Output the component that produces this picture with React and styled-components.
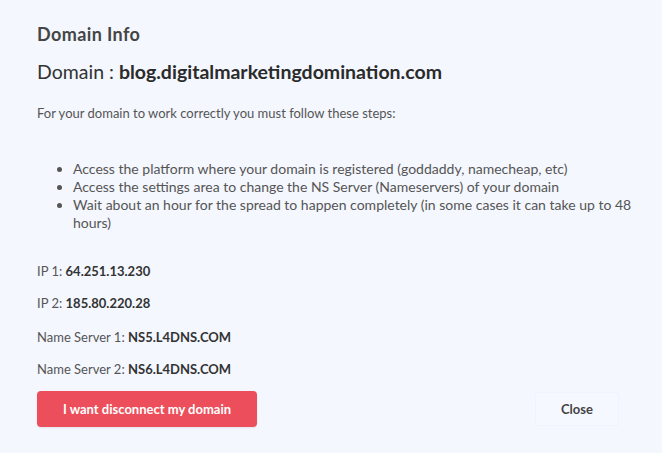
import React from "react";
import styled, {createGlobalStyle} from "styled-components";

const GlobalStyle = createGlobalStyle`
  html, body {
    margin: 0;
    padding: 0;
    background: #f4f7fe;
  }
  body {
    font-family: Lato, "Noto Sans", sans-serif;
    color: #4a4a4a;
  }
`;

const Modal = styled.div`
  width: 662px;
  height: 453px;
  box-sizing: border-box;
  padding: 22px 20px 0 37px;
  background: #f4f7fe;
  display: flex;
  flex-direction: column;
`;

const Title = styled.h3`
  margin: 0;
  font-size: 18px;
  line-height: 24px;
  font-weight: 700;
  letter-spacing: 0.4px;
  color: #454545;
`;

const DomainLine = styled.div`
  margin-top: 13px;
  font-size: 19.5px;
  line-height: 26px;
  color: #333;
  font-weight: 400;

  b {
    font-weight: 700;
    color: #2b2b2b;
  }
`;

const Text = styled.p`
  margin: 19px 0 0 0;
  font-size: 13px;
  line-height: 18px;
  color: #555;
`;

const Steps = styled.ul`
  margin: 38px 0 0 0;
  padding: 0 0 0 36px;
  font-size: 14px;
  line-height: 18px;
  color: #555;
`;

const InfoRow = styled.div`
  margin-top: ${p => p.$gap}px;
  font-size: 13px;
  line-height: 18px;
  color: #555;

  b {
    font-weight: 700;
    color: #333;
  }
`;

const Footer = styled.div`
  margin-top: 13px;
  display: flex;
  justify-content: space-between;
  align-items: center;
`;

const DangerButton = styled.button`
  width: 220px;
  height: 36px;
  border: none;
  border-radius: 4px;
  background: #ec4f5b;
  color: #fff;
  font-family: inherit;
  font-size: 13px;
  font-weight: 700;
  box-shadow: 0 1px 2px rgba(0, 0, 0, 0.08);
`;

const CloseButton = styled.button`
  width: 84px;
  height: 34px;
  margin-right: 23px;
  border: 1px solid #f0f3fb;
  border-radius: 4px;
  background: #f6f8ff;
  color: #444;
  font-family: inherit;
  font-size: 13px;
  font-weight: 700;
`;

export default function App() {
  return (
    <>
      <GlobalStyle/>
      <Modal>
        <Title>Domain Info</Title>
        <DomainLine>Domain : <b>blog.digitalmarketingdomination.com</b></DomainLine>
        <Text>For your domain to work correctly you must follow these steps:</Text>
        <Steps>
          <li>Access the platform where your domain is registered (goddaddy, namecheap, etc)</li>
          <li>Access the settings area to change the NS Server (Nameservers) of your domain</li>
          <li>Wait about an hour for the spread to happen completely (in some cases it can take up to 48 hours)</li>
        </Steps>
        <InfoRow $gap={30}>IP 1: <b>64.251.13.230</b></InfoRow>
        <InfoRow $gap={14}>IP 2: <b>185.80.220.28</b></InfoRow>
        <InfoRow $gap={16}>Name Server 1: <b>NS5.L4DNS.COM</b></InfoRow>
        <InfoRow $gap={14}>Name Server 2: <b>NS6.L4DNS.COM</b></InfoRow>
        <Footer>
          <DangerButton>I want disconnect my domain</DangerButton>
          <CloseButton>Close</CloseButton>
        </Footer>
      </Modal>
    </>
  );
}
